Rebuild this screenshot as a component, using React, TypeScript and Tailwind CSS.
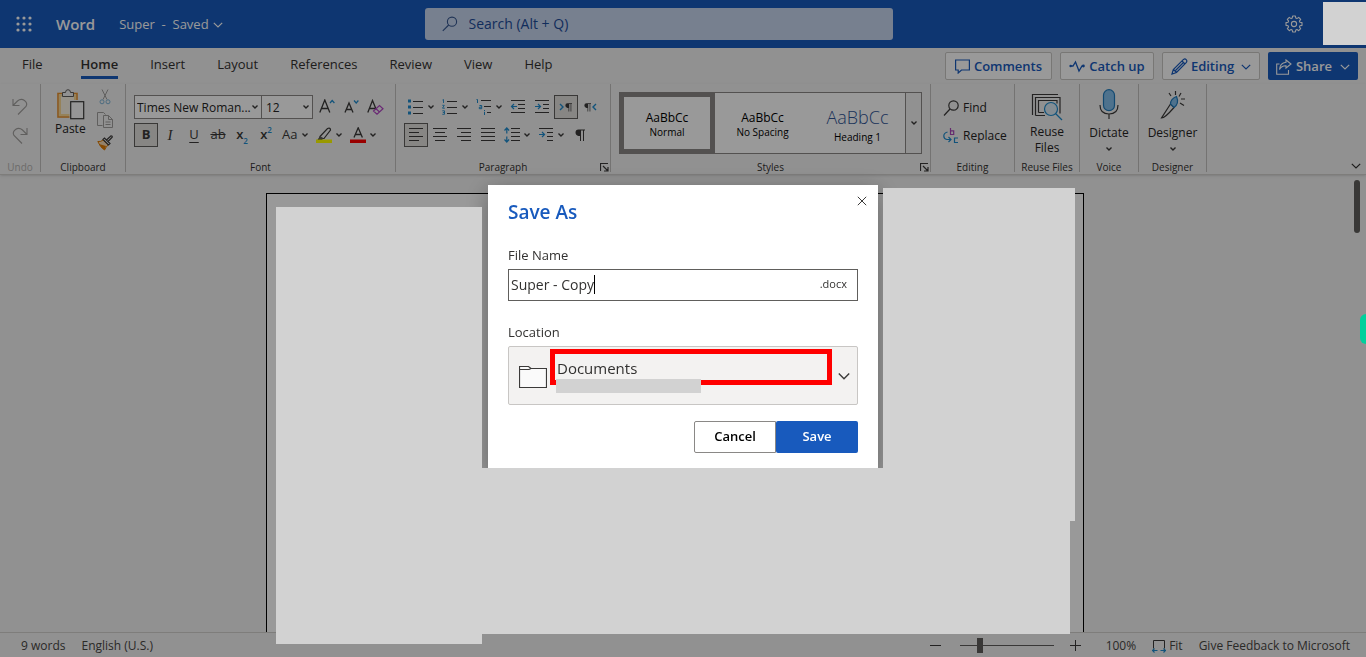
import React from "react";

type Kids = { children?: React.ReactNode };

function Svg({ w, h, children, className = "" }: Kids & { w: number; h: number; className?: string }) {
  return (
    <svg width={w} height={h} viewBox={`0 0 ${w} ${h}`} fill="none" stroke="#3b3a39" className={`shrink-0 ${className}`} aria-hidden="true">
      {children}
    </svg>
  );
}

const BLUE = "#1e8bcd";

function MiniChevron() {
  return (
    <Svg w={8} h={8}>
      <path d="M1.5 2.5 4 5l2.5-2.5" strokeWidth="1.4" />
    </Svg>
  );
}

function Chevron({ color = "#323130" }: { color?: string }) {
  return (
    <Svg w={10} h={10}>
      <path d="M.8 2.8 5 7l4.2-4.2" stroke={color} strokeWidth="1.2" />
    </Svg>
  );
}

function Tool({ label, active = false, children }: Kids & { label: string; active?: boolean }) {
  return (
    <button
      type="button"
      aria-label={label}
      className={`flex h-6 w-6 shrink-0 items-center justify-center ${active ? "border border-[#605e5c] bg-[#e1dfdd]" : ""}`}
    >
      {children}
    </button>
  );
}

function MenuTool({ label, children }: Kids & { label: string }) {
  return (
    <button type="button" aria-label={label} className="flex h-6 w-[34px] shrink-0 items-center justify-between pr-[3px] pl-1">
      {children}
      <MiniChevron />
    </button>
  );
}

function Group({ label, width, muted = false, launcher = false, children }: Kids & { label: string; width: string; muted?: boolean; launcher?: boolean }) {
  return (
    <section aria-label={label} className={`relative flex shrink-0 flex-col border-r border-[#c2c0be] ${width}`}>
      <div className="flex-1">{children}</div>
      <div className={`text-center text-[10px] leading-[10px] whitespace-nowrap ${muted ? "text-[#b5b3b1]" : "text-[#323130]"}`}>{label}</div>
      {launcher && (
        <button type="button" aria-label={`${label} settings`} className="absolute right-px bottom-0">
          <Svg w={9} h={9}>
            <path d="M.5 8V.5H8M3 3l4.5 4.5M8 4v4H4" strokeWidth="1.2" />
          </Svg>
        </button>
      )}
    </section>
  );
}

function Lines({ rows }: { rows: [number, number, number][] }) {
  return (
    <>
      {rows.map(([x, y, x2], i) => (
        <path key={i} d={`M${x} ${y}H${x2}`} />
      ))}
    </>
  );
}

function Header() {
  return (
    <header className="flex h-12 shrink-0 items-center bg-[#185abd] text-white">
      <div className="flex flex-1 items-center">
        <button type="button" aria-label="App launcher" className="ml-4">
          <svg width="16" height="16" viewBox="0 0 16 16" fill="#fff" aria-hidden="true">
            {[2, 8, 14].map((y) => [2, 8, 14].map((x) => <circle key={`${x}-${y}`} cx={x} cy={y} r="1.6" />))}
          </svg>
        </button>
        <span className="ml-6 text-[15px] font-semibold">Word</span>
        <button type="button" className="ml-6 flex items-center gap-1 pt-px text-[13px]">
          <span className="whitespace-pre">Super  -  Saved</span>
          <Chevron color="#fff" />
        </button>
      </div>
      <label className="ml-[14px] flex h-8 w-[468px] items-center rounded-[3px] bg-[#c6d5ee] pl-[17px]">
        <svg width="16" height="16" viewBox="0 0 16 16" fill="none" stroke="#35568f" strokeWidth="1.1" className="shrink-0" aria-hidden="true">
          <circle cx="10" cy="5.7" r="4.6" />
          <path d="M6.7 9 .8 14.9" />
        </svg>
        <input aria-label="Search" placeholder="Search (Alt + Q)" className="ml-[11px] min-w-0 flex-1 bg-transparent text-sm outline-none placeholder:text-[#1d4c9a]" />
      </label>
      <div className="flex flex-1 justify-end pr-[63px]">
        <button type="button" aria-label="Settings">
          <svg width="18" height="18" viewBox="0 0 18 18" fill="none" stroke="#fff" strokeWidth="1.1" strokeLinejoin="round" aria-hidden="true">
            <circle cx="9" cy="9" r="2.6" />
            <path d="M7.6 1h2.8l.4 2.1 1.1.5L13.700 2.400l2 2-1.300 1.700.5 1.200 2.100.3v2.800l-2.100.4-.5 1.100 1.300 1.800-2 2-1.800-1.300-1.100.5-.4 2.100H7.600l-.4-2.100-1.100-.5-1.800 1.300-2-2 1.300-1.800-.5-1.100L1 10.400V7.600l2.100-.3.5-1.200L2.300 4.400l2-2 1.800 1.200 1.100-.5z" />
          </svg>
        </button>
      </div>
    </header>
  );
}

function Tabs() {
  return (
    <div className="flex h-9 shrink-0 items-start">
      <nav className="flex flex-1 gap-8 pl-[22px] text-[13px] leading-8 text-[#323130]">
        <a href="#file" className="mr-1.5">File</a>
        <a href="#home" className="relative font-semibold after:absolute after:inset-x-0 after:bottom-px after:h-[3px] after:bg-[#185abd]">Home</a>
        {["Insert", "Layout", "References", "Review", "View", "Help"].map((t) => (
          <a key={t} href={`#${t.toLowerCase()}`}>{t}</a>
        ))}
      </nav>
      <div className="flex gap-2 pt-1 pr-2 text-[13px] font-semibold text-[#185abd]">
        <button type="button" className="flex h-7 w-[107px] items-center justify-center gap-1 rounded-xs border border-[#c8c6c4] bg-white pt-px">
          <Svg w={15} h={15}><path d="M.6 1h13.800v10H6.500l-3.300 3v-3H.6z" stroke="#185abd" strokeWidth="1.200" /></Svg>
          Comments
        </button>
        <button type="button" className="flex h-7 w-[94px] items-center justify-center gap-1 rounded-xs border border-[#c8c6c4] bg-white pt-px">
          <Svg w={16} h={14}>
            <path d="M2 6h2L6.500 2l3.500 9L13 6h1.500" stroke="#185abd" strokeWidth="1.300" />
            <circle cx="1.600" cy="6" r="1.200" fill="#185abd" stroke="none" />
            <circle cx="14.400" cy="6" r="1.400" fill="#185abd" stroke="none" />
          </Svg>
          Catch up
        </button>
        <button type="button" className="flex h-7 w-[98px] items-center justify-center gap-[3px] rounded-xs border border-[#c8c6c4] bg-white pt-px">
          <Svg w={17} h={17}>
            <path d="M1 16l1.300-4.500L12.500 1.400q1.500-1 2.700.2t.2 2.700L5.500 14.500zM11 3l3 3M2.500 11.500l3 3M4.500 12.500l8-8" stroke="#185abd" strokeWidth="1.200" />
          </Svg>
          <span className="mr-1">Editing</span>
          <Chevron color="#185abd" />
        </button>
        <button type="button" className="flex h-7 w-[90px] items-center justify-center gap-1 rounded-xs bg-[#185abd] pt-px text-white">
          <Svg w={16} h={16}>
            <path d="M3.500 5H.700v10.300h11.800V11M10 1l5 4-5 4V6.700Q5.500 6.500 3.500 10.500 4 4 10 3.300z" stroke="#fff" strokeWidth="1.100" />
          </Svg>
          <span className="mr-1">Share</span>
          <Chevron color="#fff" />
        </button>
      </div>
    </div>
  );
}

function ClipboardGroup() {
  return (
    <Group label="Clipboard" width="w-[85px]">
      <div className="flex justify-between pt-[5px] pr-3 pl-[14px]">
        <button type="button" className="flex flex-col items-center gap-px text-xs leading-4">
          <Svg w={30} h={31}>
            <rect x="3" y="4.500" width="19" height="23.500" fill="#faf3e4" stroke="#e8912d" strokeWidth="1.600" />
            <rect x="5" y="6.500" width="15" height="19.500" stroke="#fbd995" strokeWidth="2" fill="none" />
            <path d="M7.500 7.500v-4H10.500Q10.500.700 13 .700t2.500 2.800h3v4z" fill="#f2f2f2" stroke="#605e5c" />
            <rect x="14.500" y="11" width="15" height="20" fill="#f2f2f2" stroke="none" />
            <rect x="15.700" y="12.700" width="13" height="17" fill="#fafafa" strokeWidth="1.200" />
          </Svg>
          Paste
        </button>
        <div className="flex flex-col gap-[7px]">
          <button type="button" aria-label="Cut">
            <Svg w={16} h={16}>
              <path d="M5 .500l5 10M11 .500l-5 10" stroke="#a19f9d" />
              <circle cx="5" cy="12.800" r="2" stroke="#7fb4d6" />
              <circle cx="11" cy="12.800" r="2" stroke="#7fb4d6" />
            </Svg>
          </button>
          <button type="button" aria-label="Copy">
            <Svg w={16} h={16}>
              <path d="M5.500 13.500H.500v-13h6l2 2M6.500 3.500h5l4 4v8h-9zM11.500 3.500v4h4M8.500 10h5M8.500 12.500h5" stroke="#a19f9d" />
            </Svg>
          </button>
          <button type="button" aria-label="Format painter">
            <Svg w={16} h={16}>
              <path d="M.800 6.500Q4 7 6 5l5 5q-2 2-3.500 5Q3 12 .800 6.500z" fill="#f8d9b0" stroke="#e07b00" />
              <path d="M2 9l7 2-1.500 4Q4 13 2 9z" fill="#e07b00" stroke="none" />
              <path d="M6 4.500l1.500-1.500 5.500 5.500-1.500 1.500zM9.500 5L14 .800q1.500 0 1.200 1.400L11 6.500" fill="#f2f2f2" strokeWidth="1.200" />
            </Svg>
          </button>
        </div>
      </div>
    </Group>
  );
}

function FontGroup() {
  return (
    <Group label="Font" width="w-[270px]">
      <div className="flex flex-col gap-1 pt-[11px] pl-2">
        <div className="flex h-6">
          <div className="relative flex">
            <select aria-label="Font" className="h-6 w-32 appearance-none border border-[#8a8886] bg-white pt-px pl-0.5 text-xs">
              <option>Times New Roman...</option>
            </select>
            <span className="pointer-events-none absolute top-2 right-[3px]"><MiniChevron /></span>
          </div>
          <div className="relative flex">
            <select aria-label="Font size" className="-ml-px h-6 w-[52px] appearance-none border border-[#8a8886] bg-white pt-px pl-1 text-xs">
              <option>12</option>
            </select>
            <span className="pointer-events-none absolute top-2 right-[3px]"><MiniChevron /></span>
          </div>
          <div className="ml-0.5 flex">
            <Tool label="Grow font">
              <Svg w={16} h={16}><path d="M.800 13.500L5.800 1l5 12.500M2.500 9.500h6.600" strokeWidth="1.300" /><path d="M11 4l2.200-2.500 2.200 2.500" stroke={BLUE} strokeWidth="1.200" /></Svg>
            </Tool>
            <Tool label="Shrink font">
              <Svg w={16} h={16}><path d="M2 13.500L6 4l4 9.500M3.300 10.500h5.400" strokeWidth="1.300" /><path d="M11 1.500l2.200 2.500 2.200-2.500" stroke={BLUE} strokeWidth="1.200" /></Svg>
            </Tool>
            <Tool label="Clear formatting">
              <Svg w={17} h={16}><path d="M.800 13.500L5.500 1.500l3.700 9M2.300 9.500h6" strokeWidth="1.300" /><path d="M6.500 12l6-5.500 3.500 3.200-6 5.500zM9 9.800l3.500 3.200" stroke="#b146c2" strokeWidth="1.200" /></Svg>
            </Tool>
          </div>
        </div>
        <div className="flex text-[13px] text-[#3b3a39]">
          <Tool label="Bold" active><b>B</b></Tool>
          <Tool label="Italic"><span className="font-['Liberation_Serif',serif] text-[15px] italic">I</span></Tool>
          <Tool label="Underline"><span className="underline underline-offset-3">U</span></Tool>
          <Tool label="Strikethrough"><span className="line-through">ab</span></Tool>
          <Tool label="Subscript"><span className="flex items-end font-semibold">x<span className="text-[8px] leading-[8px] text-[#1e8bcd]">2</span></span></Tool>
          <Tool label="Superscript"><span className="flex items-start font-semibold">x<span className="text-[8px] leading-[10px] text-[#1e8bcd]">2</span></span></Tool>
          <MenuTool label="Change case"><span>Aa</span></MenuTool>
          <MenuTool label="Highlight colour">
            <Svg w={16} h={16}>
              <path d="M4 9.500L11.500 1.500q3-1 3 1.500L8 11.500H5zM4.500 9.500l-2 3h4" fill="#f2f2f2" strokeWidth="1.200" />
              <path d="M4 9l4 2.500-5 1z" fill="#605e5c" stroke="none" />
              <path d="M0 12.500h16v3.500H0z" fill="#ff0" stroke="none" />
            </Svg>
          </MenuTool>
          <MenuTool label="Font colour">
            <Svg w={16} h={16}>
              <path d="M4 10.500L8.200.800l4.200 9.700M5.500 7.500h5.500" strokeWidth="1.300" />
              <path d="M0 12.500h16v3.500H0z" fill="#f00" stroke="none" />
            </Svg>
          </MenuTool>
        </div>
      </div>
    </Group>
  );
}

function Pilcrow({ x = 0, y = 0, s = 1 }: { x?: number; y?: number; s?: number }) {
  return (
    <g transform={`translate(${x} ${y}) scale(${s})`}>
      <path d="M5 7H3.500Q.500 6.500.500 3.600T3.500.500H10v1H9V12H8V1.500H6V12H5z" fill="#3b3a39" stroke="none" />
    </g>
  );
}

function ParagraphGroup() {
  return (
    <Group label="Paragraph" width="w-[215px]" launcher>
      <div className="flex flex-col gap-1 pt-[11px] pl-2">
        <div className="flex">
          <MenuTool label="Bullets">
            <Svg w={16} h={16}><path d="M0 .500h3v3H0zM0 6.500h3v3H0zM0 12.500h3v3H0z" fill={BLUE} stroke="none" /><Lines rows={[[5, 2.5, 15], [5, 8.5, 15], [5, 14.5, 15]]} /></Svg>
          </MenuTool>
          <MenuTool label="Numbering">
            <Svg w={16} h={16}>
              <g stroke={BLUE} strokeWidth=".9"><path d="M.500 1L1.500.500V4M.300 6.300h2L.500 9.200h2.300M.300 11.800h2.200v3.500H.300M.800 13.500h1.500" /></g>
              <Lines rows={[[5, 2.5, 15], [5, 8.5, 15], [5, 14.5, 15]]} />
            </Svg>
          </MenuTool>
          <MenuTool label="Multilevel list">
            <Svg w={16} h={16}>
              <g stroke={BLUE} strokeWidth="1"><path d="M.500.500h1V4M3.500 6.500h2.200v3.200H3.300V8.200h2.200M8.500 11v1M8.500 12.800V16" /></g>
              <Lines rows={[[5, 1.5, 15], [8, 7.5, 15], [11, 13.5, 15]]} />
            </Svg>
          </MenuTool>
          <Tool label="Decrease indent">
            <Svg w={16} h={16}><Lines rows={[[1, 1.5, 15], [8, 5.5, 15], [8, 9.5, 15], [1, 13.5, 15]]} /><path d="M7 7.500H1.500M4 5L1.500 7.500 4 10" stroke={BLUE} strokeWidth="1.200" /></Svg>
          </Tool>
          <Tool label="Increase indent">
            <Svg w={16} h={16}><Lines rows={[[1, 1.5, 15], [9, 5.5, 15], [9, 9.5, 15], [1, 13.5, 15]]} /><path d="M1 7.500h5.500M4 5l2.500 2.500L4 10" stroke={BLUE} strokeWidth="1.200" /></Svg>
          </Tool>
          <Tool label="Left to right" active>
            <Svg w={14} h={12}><path d="M1 3l3 3-3 3" stroke={BLUE} strokeWidth="1.400" /><Pilcrow x={6} y={2} s={0.7} /></Svg>
          </Tool>
          <Tool label="Right to left">
            <Svg w={14} h={12}><path d="M13 3l-3 3 3 3" stroke={BLUE} strokeWidth="1.400" /><Pilcrow x={1} y={2} s={0.7} /></Svg>
          </Tool>
        </div>
        <div className="flex">
          <Tool label="Align left" active><Svg w={14} h={14}><Lines rows={[[0, 0.5, 14], [0, 4.5, 10], [0, 8.5, 14], [0, 12.5, 10]]} /></Svg></Tool>
          <Tool label="Centre"><Svg w={14} h={14}><Lines rows={[[0, 0.5, 14], [2, 4.5, 12], [0, 8.5, 14], [2, 12.5, 12]]} /></Svg></Tool>
          <Tool label="Align right"><Svg w={14} h={14}><Lines rows={[[0, 0.5, 14], [4, 4.5, 14], [0, 8.5, 14], [4, 12.5, 14]]} /></Svg></Tool>
          <Tool label="Justify"><Svg w={14} h={14}><Lines rows={[[0, 0.5, 14], [0, 4.5, 14], [0, 8.5, 14], [0, 12.5, 14]]} /></Svg></Tool>
          <MenuTool label="Line spacing">
            <Svg w={16} h={16}><Lines rows={[[7, 1.5, 16], [7, 5.5, 16], [7, 9.5, 16], [7, 13.5, 16]]} /><path d="M2.800 1v5.500M.500 3.500L2.800 1l2.300 2.500M2.800 9.500V15M.500 12.500L2.800 15l2.300-2.500" stroke={BLUE} strokeWidth="1.200" /></Svg>
          </MenuTool>
          <MenuTool label="Special indent">
            <Svg w={16} h={16}><Lines rows={[[1, 1.5, 15], [9, 5.5, 15], [9, 9.5, 15], [9, 13.5, 15]]} /><path d="M1 7.500h5.500M4 5l2.500 2.500L4 10" stroke={BLUE} strokeWidth="1.200" /></Svg>
          </MenuTool>
          <Tool label="Show marks"><Svg w={11} h={13}><Pilcrow /></Svg></Tool>
        </div>
      </div>
    </Group>
  );
}

function StylesGroup() {
  return (
    <Group label="Styles" width="w-[320px]" launcher>
      <div className="mt-2 ml-2 flex h-[62px] w-[303px] border border-[#8a8886] bg-white text-[10px] leading-3 text-black">
        <button type="button" className="-my-px -ml-px flex w-24 flex-col items-center justify-center border-5 border-[#8a8886] pt-0.5">
          <span className="text-xs leading-4">AaBbCc</span>Normal
        </button>
        <button type="button" className="flex flex-1 flex-col items-center justify-center pt-0.5">
          <span className="text-xs leading-4">AaBbCc</span>No Spacing
        </button>
        <button type="button" className="flex flex-1 flex-col items-center justify-end pb-2.5">
          <span className="text-lg leading-7 font-light text-[#2f5496]">AaBbCc</span>Heading 1
        </button>
        <button type="button" aria-label="More styles" className="flex w-4 items-center justify-center border-l border-[#8a8886] bg-[#f2f2f2]"><MiniChevron /></button>
      </div>
    </Group>
  );
}

function Ribbon() {
  return (
    <div className="flex shrink-0 border-b border-[#d2d0ce] pb-0.5 shadow-sm">
      <div className="flex h-[88px] flex-1">
        <Group label="Undo" width="w-[41px]" muted>
          <div className="flex flex-col items-center gap-3 pt-[14px]">
            <button type="button" aria-label="Undo"><Svg w={16} h={17}><path d="M1 1v6.500h6.500M1 7.500L5.500 3Q9 0 12.500 2.500T14 8.500L6 16.500" stroke="#a19f9d" strokeWidth="1.100" /></Svg></button>
            <button type="button" aria-label="Redo"><Svg w={16} h={17}><path d="M15 1v6.500H8.500M15 7.500L10.500 3Q7 0 3.500 2.500T2 8.500L10 16.500" stroke="#a19f9d" strokeWidth="1.100" /></Svg></button>
          </div>
        </Group>
        <ClipboardGroup />
        <FontGroup />
        <ParagraphGroup />
        <StylesGroup />
        <Group label="Editing" width="w-[84px]">
          <div className="flex flex-col gap-1 pt-3 pl-3 text-xs">
            <button type="button" className="flex h-6 items-center gap-1">
              <Svg w={16} h={16}><circle cx="10.500" cy="5.500" r="4.700" strokeWidth="1.200" /><path d="M7 9L1 15.500" strokeWidth="1.200" /></Svg>
              Find
            </button>
            <button type="button" className="flex h-6 items-center gap-1">
              <Svg w={16} h={16}>
                <path d="M7.500 0v6.500h3.200V2.800H7.500" stroke="#a846b9" strokeWidth="1.200" />
                <path d="M4.500 4Q.800 5 .800 8t3 3.500H8M5.500 9L8 11.500 5.500 14M15 10h-3.500v4.500H15" stroke={BLUE} strokeWidth="1.200" />
              </Svg>
              Replace
            </button>
          </div>
        </Group>
        <Group label="Reuse Files" width="w-[65px]">
          <button type="button" className="flex w-full flex-col items-center gap-[3px] pt-[9px] text-xs leading-4">
            <Svg w={32} h={28}>
              <path d="M1.500 22V1.500H27M4.500 22.500v-18h24.500v16M4.500 22.500H14M7.500 19.500v-12h18.500v3M7.500 19.500H13" strokeWidth="1.200" />
              <circle cx="20" cy="16" r="6.500" fill="#dcebf6" stroke={BLUE} strokeWidth="1.200" />
              <path d="M24.500 20.500l6.500 6.500" stroke={BLUE} strokeWidth="1.200" />
            </Svg>
            <span className="w-10">Reuse Files</span>
          </button>
        </Group>
        <Group label="Voice" width="w-[59px]">
          <button type="button" className="flex w-full flex-col items-center gap-1 pt-[5px] text-xs leading-4">
            <Svg w={20} h={32}>
              <rect x="4.500" y=".700" width="11" height="21" rx="5.500" fill="#83beec" stroke="#1e7bbd" strokeWidth="1.200" />
              <path d="M1 16q0 9 9 9t9-9M10 25v5" strokeWidth="1.200" />
            </Svg>
            Dictate
            <MiniChevron />
          </button>
        </Group>
        <Group label="Designer" width="w-[68px]">
          <button type="button" className="flex w-full flex-col items-center gap-1 pt-[5px] text-xs leading-4">
            <Svg w={26} h={32}>
              <path d="M10.500 15L1.500 29Q5 29 14 18.500z" strokeWidth="1.200" />
              <path d="M10.500 15q0-5 6-7.500 3 7-2.500 11z" fill="#83beec" stroke="#1e7bbd" strokeWidth="1.200" />
              <path d="M15.500 2v4M9 4l2 3M21 4l-2 3.500M21 10h4M20 14l4 2.500" strokeWidth="1.200" />
            </Svg>
            Designer
            <MiniChevron />
          </button>
        </Group>
      </div>
      <button type="button" aria-label="Collapse ribbon" className="self-end pr-[5px] pb-px"><Chevron /></button>
    </div>
  );
}

function StatusBar() {
  return (
    <footer className="flex h-[25px] shrink-0 items-center border-t border-[#d2d0ce] pt-px pr-4 pl-[21px] text-xs text-[#484644]">
      <span>9 words</span>
      <span className="ml-4 flex-1">English (U.S.)</span>
      <button type="button" aria-label="Zoom out"><Svg w={12} h={12}><path d="M0 5.500h11" /></Svg></button>
      <input
        type="range"
        aria-label="Zoom"
        defaultValue={20}
        className="mr-4 ml-[18px] h-4 w-[94px] appearance-none bg-[linear-gradient(#605e5c,#605e5c)] bg-[length:100%_1px] bg-center bg-no-repeat [&::-webkit-slider-thumb]:h-[15px] [&::-webkit-slider-thumb]:w-1.5 [&::-webkit-slider-thumb]:appearance-none [&::-webkit-slider-thumb]:bg-[#605e5c]"
      />
      <button type="button" aria-label="Zoom in"><Svg w={12} h={12}><path d="M0 5.500h11M5.500 0v11" /></Svg></button>
      <span className="ml-6">100%</span>
      <button type="button" className="ml-4 flex items-center gap-[3px]">
        <Svg w={14} h={14}><path d="M1.500 9.500v-8h11v8" /><path d="M0 11.500h5.500M2.500 9.500l-2 2 2 2M8.500 11.500H14M11.500 9.500l2 2-2 2" stroke={BLUE} strokeWidth="1.200" /></Svg>
        Fit
      </button>
      <a href="#feedback" className="ml-4">Give Feedback to Microsoft</a>
    </footer>
  );
}

function SaveAsDialog() {
  return (
    <form
      role="dialog"
      aria-labelledby="save-title"
      onSubmit={(e) => e.preventDefault()}
      className="relative flex w-[390px] flex-col bg-white px-5 pt-[13px] pb-5 text-[13px] text-[#323130] shadow-[0_6px_22px_rgba(0,0,0,0.35)]"
    >
      <h1 id="save-title" className="text-[19px] leading-7 font-semibold text-[#185abd]">Save As</h1>
      <button type="button" aria-label="Close" className="absolute top-[11px] right-[11px]">
        <Svg w={10} h={10}><path d="M.800.800l8.400 8.400M9.200.800L.800 9.200" /></Svg>
      </button>
      <label htmlFor="file-name" className="mt-[19px] leading-5">File Name</label>
      <div className="mt-1 flex h-8 items-center border border-[#605e5c] pr-2.5 pl-0.5">
        <div className="flex min-w-0 flex-1 items-center">
          <input id="file-name" defaultValue="Super - Copy" className="field-sizing-content bg-transparent text-sm outline-none" />
          <span className="h-[19px] w-px bg-black" />
        </div>
        <span className="text-[11px]">.docx</span>
      </div>
      <span id="location-label" className="mt-[21px] leading-5">Location</span>
      <button type="button" aria-labelledby="location-label" className="relative mt-1 flex h-[59px] items-center rounded-xs border border-[#c8c6c4] bg-[#f3f2f1] pt-1 pr-[7px] pl-2.5 text-left">
        <Svg w={28} h={24}><path d="M.500 4.500V1.500h9l2.500 2h15.500v19H.500zM.500 4.500h9.500l2-1" fill="#fafafa" strokeWidth="1.200" /></Svg>
        <span className="ml-2.5 flex-1 pb-[18px] text-[15px] leading-5">Documents</span>
        <Svg w={12} h={12}><path d="M.800 2.500L6 7.700l5.200-5.200" strokeWidth="1.400" /></Svg>
        <span className="absolute top-[2px] right-[25px] left-[41px] h-9 border-5 border-[#ff0000]" />
        <span className="absolute top-8 left-[47px] h-3.5 w-[145px] bg-[#d2d2d2]" />
      </button>
      <div className="mt-4 flex justify-end text-[13px] font-semibold">
        <button type="button" className="h-8 w-[82px] rounded-l-xs border border-[#8a8886] pt-px text-black">Cancel</button>
        <button type="submit" className="h-8 w-[82px] rounded-xs bg-[#185abd] pt-px text-white">Save</button>
      </div>
    </form>
  );
}

export default function App() {
  return (
    <div className="relative flex h-screen flex-col overflow-hidden bg-[#f2f2f2] font-['Open_Sans','Noto_Sans',sans-serif] text-[#252423]">
      <Header />
      <Tabs />
      <Ribbon />
      <main className="flex min-h-0 flex-1">
        <div className="flex flex-1 justify-center pt-[18px]">
          <div className="w-[818px] border border-b-0 border-black bg-white" />
        </div>
        <div className="w-4 pt-[5px] pl-1">
          <div className="h-[53px] w-1.5 rounded-full bg-[#605e5c]" />
        </div>
      </main>
      <StatusBar />
      <div className="fixed inset-0 flex items-center justify-center bg-black/40">
        <SaveAsDialog />
        <div className="absolute top-[207px] left-[276px] h-[437px] w-[206px] bg-[#d2d2d2]" />
        <div className="absolute top-[188px] left-[883px] h-[333px] w-48 bg-[#d2d2d2]" />
        <div className="absolute top-[468px] left-[482px] h-[166px] w-[588px] bg-[#d2d2d2]" />
        <div className="absolute top-0.5 right-0 h-[43px] w-[43px] bg-[#d2d2d2]" />
        <div className="absolute top-[314px] right-0 h-[30px] w-1.5 rounded-l-md bg-[#00d09c]" />
      </div>
    </div>
  );
}
